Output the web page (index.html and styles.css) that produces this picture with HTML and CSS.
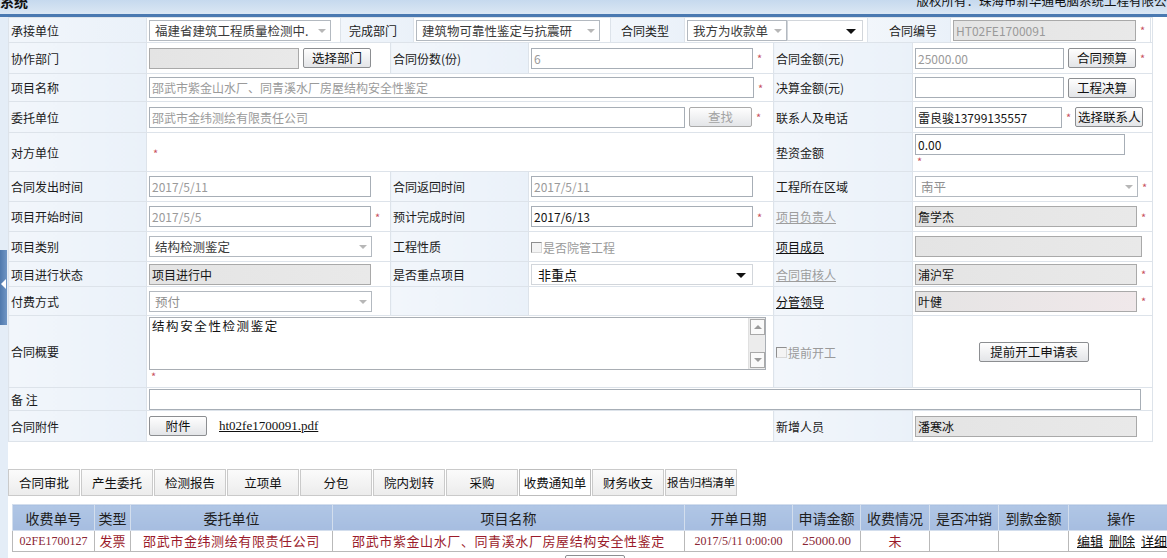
FILE: index.html
```html
<!DOCTYPE html>
<html lang="zh-CN">
<head>
<meta charset="utf-8">
<title>合同</title>
<link rel="stylesheet" href="styles.css">
</head>
<body>
<div class="page">
  <div class="topbar">
    <span class="sys">系统</span>
    <span class="copy">版权所有：珠海市新华通电脑系统工程有限公司</span>
  </div>
  <div class="handle"><span class="tri"></span></div>
  <div class="main">
    <table class="form">
      <colgroup><col class="c1"><col class="c2"><col class="c3"><col class="c4"><col class="c5"><col class="c6"></colgroup>
      <tr class="h25">
        <td colspan="6" class="flexcell">
          <div class="fr">
            <div class="fc lbl w138">承接单位</div>
            <div class="fc val w194"><span class="sel w182 dark">福建省建筑工程质量检测中.</span></div>
            <div class="fc lbl w73 pl8">完成部门</div>
            <div class="fc val w197"><span class="sel w184 dark">建筑物可靠性鉴定与抗震研</span></div>
            <div class="fc lbl w74 pl10">合同类型</div>
            <div class="fc val w183"><span class="sel w100 dark">我方为收款单</span><span class="sel blk w76"></span></div>
            <div class="fc lbl w83 pl22">合同编号</div>
            <div class="fc val w200"><span class="inp ro w183">HT02FE1700091</span><span class="star">*</span></div>
          </div>
        </td>
      </tr>
      <tr class="h31">
        <td class="lbl">协作部门</td>
        <td class="val"><span class="inp ro w150"></span><span class="btn w68 ml4">选择部门</span></td>
        <td class="lbl">合同份数(份)</td>
        <td class="val"><span class="inp w222">6</span><span class="star">*</span></td>
        <td class="lbl">合同金额(元)</td>
        <td class="val"><span class="inp w149">25000.00</span><span class="btn w68 ml4">合同预算</span><span class="star">*</span></td>
      </tr>
      <tr class="h28">
        <td class="lbl">项目名称</td>
        <td class="val" colspan="3"><span class="inp w605">邵武市紫金山水厂、同青溪水厂房屋结构安全性鉴定</span><span class="star">*</span></td>
        <td class="lbl">决算金额(元)</td>
        <td class="val"><span class="inp w149"></span><span class="btn w68 ml4">工程决算</span></td>
      </tr>
      <tr class="h31">
        <td class="lbl">委托单位</td>
        <td class="val" colspan="3"><span class="inp w536">邵武市金纬测绘有限责任公司</span><span class="btn w63 ml4 dis">查找</span><span class="star">*</span></td>
        <td class="lbl">联系人及电话</td>
        <td class="val"><span class="inp dark w147">雷良骏13799135557</span><span class="star">*</span><span class="btn w68 ml4">选择联系人</span></td>
      </tr>
      <tr class="h39">
        <td class="lbl">对方单位</td>
        <td class="val" colspan="3"><span class="star ml3">*</span></td>
        <td class="lbl">垫资金额</td>
        <td class="val top"><span class="inp dark w210 blk">0.00</span><span class="star sub">*</span></td>
      </tr>
      <tr class="h30">
        <td class="lbl">合同发出时间</td>
        <td class="val"><span class="inp w222">2017/5/11</span></td>
        <td class="lbl">合同返回时间</td>
        <td class="val"><span class="inp w222">2017/5/11</span></td>
        <td class="lbl">工程所在区域</td>
        <td class="val"><span class="sel w223">南平</span><span class="star">*</span></td>
      </tr>
      <tr class="h30">
        <td class="lbl">项目开始时间</td>
        <td class="val"><span class="inp w222">2017/5/5</span><span class="star">*</span></td>
        <td class="lbl">预计完成时间</td>
        <td class="val"><span class="inp dark w222">2017/6/13</span><span class="star">*</span></td>
        <td class="lbl"><span class="lnk gray">项目负责人</span></td>
        <td class="val"><span class="inp ro dark w222">詹学杰</span><span class="star">*</span></td>
      </tr>
      <tr class="h30">
        <td class="lbl">项目类别</td>
        <td class="val"><span class="sel dark w223">结构检测鉴定</span></td>
        <td class="lbl">工程性质</td>
        <td class="val"><span class="chk"></span><span class="gtxt">是否院管工程</span></td>
        <td class="lbl"><span class="lnk">项目成员</span></td>
        <td class="val"><span class="inp ro w227"></span></td>
      </tr>
      <tr class="h25">
        <td class="lbl">项目进行状态</td>
        <td class="val"><span class="inp ro dark w222">项目进行中</span></td>
        <td class="lbl">是否重点项目</td>
        <td class="val"><span class="sel blk dark w222">非重点</span></td>
        <td class="lbl"><span class="lnk gray">合同审核人</span></td>
        <td class="val"><span class="inp ro dark w222">浦沪军</span><span class="star">*</span></td>
      </tr>
      <tr class="h29">
        <td class="lbl">付费方式</td>
        <td class="val"><span class="sel w223">预付</span></td>
        <td class="lbl"></td>
        <td class="val"></td>
        <td class="lbl"><span class="lnk">分管领导</span></td>
        <td class="val"><span class="inp ro pink dark w222">叶健</span><span class="star">*</span></td>
      </tr>
      <tr class="h72">
        <td class="lbl">合同概要</td>
        <td class="val top" colspan="3">
          <div class="ta"><span class="tatext">结构安全性检测鉴定</span>
            <div class="sb"><span class="sbb up"></span><span class="sbb dn"></span></div>
          </div>
          <span class="star sub">*</span>
        </td>
        <td class="lbl"><span class="chk"></span><span class="gtxt">提前开工</span></td>
        <td class="val"><span class="btn w110 ml66">提前开工申请表</span></td>
      </tr>
      <tr class="h23">
        <td class="lbl">备&nbsp;注</td>
        <td class="val" colspan="5"><span class="inp w992"></span></td>
      </tr>
      <tr class="h31">
        <td class="lbl">合同附件</td>
        <td class="val" colspan="3"><span class="btn w58">附件</span><span class="file">ht02fe1700091.pdf</span></td>
        <td class="lbl">新增人员</td>
        <td class="val"><span class="inp ro dark w222">潘寒冰</span></td>
      </tr>
    </table>

    <div class="tabs">
      <span class="tab">合同审批</span>
      <span class="tab">产生委托</span>
      <span class="tab">检测报告</span>
      <span class="tab">立项单</span>
      <span class="tab">分包</span>
      <span class="tab">院内划转</span>
      <span class="tab">采购</span>
      <span class="tab on">收费通知单</span>
      <span class="tab">财务收支</span>
      <span class="tab tight">报告归档清单</span>
    </div>

    <table class="grid">
      <colgroup>
        <col class="g1"><col class="g2"><col class="g3"><col class="g4"><col class="g5">
        <col class="g6"><col class="g7"><col class="g8"><col class="g9"><col class="g10">
      </colgroup>
      <tr class="gh">
        <th>收费单号</th><th>类型</th><th>委托单位</th><th>项目名称</th><th>开单日期</th>
        <th>申请金额</th><th>收费情况</th><th>是否冲销</th><th>到款金额</th><th>操作</th>
      </tr>
      <tr class="gd">
        <td class="serif sm">02FE1700127</td>
        <td>发票</td>
        <td class="sp">邵武市金纬测绘有限责任公司</td>
        <td class="sp">邵武市紫金山水厂、同青溪水厂房屋结构安全性鉴定</td>
        <td class="serif sm">2017/5/11 0:00:00</td>
        <td class="serif">25000.00</td>
        <td>未</td>
        <td></td>
        <td></td>
        <td class="ops"><span class="op">编辑</span><span class="op">删除</span><span class="op">详细</span></td>
      </tr>
    </table>
    <div class="addrow"><span class="btn w60">增加</span></div>
  </div>
</div>
</body>
</html>
```

FILE: styles.css
```css
* { box-sizing: border-box; }
html, body { margin: 0; padding: 0; }
body {
  width: 1167px;
  height: 558px;
  overflow: hidden;
  background: #fff;
  font-family: "Noto Sans CJK SC", "Liberation Sans", sans-serif;
  font-size: 12px;
  color: #1a1a1a;
}
.page { position: relative; width: 1167px; height: 558px; overflow: hidden; }

.topbar {
  height: 17px;
  background: linear-gradient(#c6d9ee, #dbe7f4);
  border-bottom: 3px solid #4a79b1;
  display: flex;
  justify-content: space-between;
  overflow: hidden;
}
.sys { font-weight: bold; font-size: 14px; line-height: 16px; margin-top: -7px; color: #111; }
.copy { font-size: 12.5px; line-height: 16px; margin-top: -7px; margin-right: -12px; white-space: nowrap; color: #111; }

.handle {
  position: absolute;
  left: 0; top: 250px;
  width: 7px; height: 75px;
  background: linear-gradient(90deg, #4f79ad, #6f95c4);
}
.tri {
  position: absolute; left: 1px; top: 29px;
  width: 0; height: 0;
  border-top: 5px solid transparent;
  border-bottom: 5px solid transparent;
  border-right: 5px solid #fff;
}

.main {
  padding-left: 8px;
  width: 1175px;
  background: linear-gradient(90deg, #e4edf7 0, #e4edf7 8px, #fff 8px);
}

/* ---------- form ---------- */
.form {
  border-collapse: collapse;
  table-layout: fixed;
  width: 1144px;
  border-right: 1px solid #cfd6de;
}
.c1 { width: 138px; } .c2 { width: 244px; } .c3 { width: 138px; }
.c4 { width: 245px; } .c5 { width: 139px; } .c6 { width: 240px; }
.form td {
  border: 1px solid #dde3ea;
  padding: 0 0 0 2px;
  white-space: nowrap;
  vertical-align: middle;
  overflow: hidden;
}
.form td.top { vertical-align: top; padding-top: 1px; }
.form td.flexcell { padding: 0; }
.lbl { background: linear-gradient(90deg, #f2f6fb, #eaf1f9); color: #1a1a1a; }
.val { background: #fff; }
.h23 { height: 23px; } .h25 { height: 25px; } .h28 { height: 28px; } .h29 { height: 29px; }
.h30 { height: 30px; } .h31 { height: 31px; } .h39 { height: 39px; } .h72 { height: 72px; }

.fr { display: flex; height: 24px; }
.fc { display: flex; align-items: center; padding-left: 2px; border-right: 1px solid #dde3ea; }
.fc.pl8 { padding-left: 8px; }
.fc.pl10 { padding-left: 10px; }
.fc.pl22 { padding-left: 21px; }
.w73 { width: 73px; } .w74 { width: 74px; } .w83 { width: 83px; } .w138 { width: 138px; }
.w194 { width: 194px; } .w197 { width: 197px; } .w183 { width: 183px; } .w200 { width: 200px; }
.w182 { width: 182px; } .w184 { width: 184px; } .w100 { width: 100px; } .w76 { width: 76px; }

.inp {
  display: inline-block;
  height: 21px;
  border: 1px solid #a7aeb6;
  background: #fff;
  vertical-align: middle;
  line-height: 19px;
  padding-left: 2px;
  color: #9a9a9a;
  font-size: 12px;
  overflow: hidden;
  white-space: nowrap;
}
.inp.ro { background: linear-gradient(90deg, #e4e4e4, #e9e9e9); border-color: #a9a9a9; }
.inp.pink { background: linear-gradient(90deg, #e5e4e4, #f0e8ea); }
.inp.dark { color: #141414; }
.inp.blk { display: block; }
.w147 { width: 147px; } .w149 { width: 149px; } .w150 { width: 150px; } .w210 { width: 210px; }
.w222 { width: 222px; } .w223 { width: 223px; } .w227 { width: 227px; } .w536 { width: 536px; }
.w605 { width: 605px; } .w992 { width: 992px; }

.sel {
  position: relative;
  display: inline-block;
  height: 21px;
  border: 1px solid #b3b9c0;
  background: #fff;
  vertical-align: middle;
  line-height: 19px;
  padding-left: 5px;
  color: #8f8f8f;
  font-size: 12.5px;
  overflow: hidden;
  white-space: nowrap;
}
.sel.dark { color: #3a3a3a; }
.sel::after {
  content: "";
  position: absolute;
  right: 4px; top: 8px;
  width: 0; height: 0;
  border-left: 4px solid transparent;
  border-right: 4px solid transparent;
  border-top: 4px solid #b7b7b7;
}
.sel.blk { border-color: #d2d6db; }
.sel.blk::after { border-top-color: #111; right: 6px; border-left-width: 5px; border-right-width: 5px; border-top-width: 5px; }
.sel.blk.dark { color: #111; font-size: 13px; padding-left: 6px; }

.btn {
  display: inline-block;
  height: 20px;
  border: 1px solid #8c8e91;
  border-radius: 2px;
  background: linear-gradient(#fefefe, #e3e5e8);
  font-size: 12.5px;
  line-height: 18px;
  text-align: center;
  vertical-align: middle;
  color: #111;
}
.btn.dis { color: #a3a3a3; border-color: #aaa; }
.w58 { width: 58px; } .w60 { width: 60px; } .w63 { width: 63px; } .w68 { width: 68px; } .w110 { width: 110px; }
.ml3 { margin-left: 3px; } .ml4 { margin-left: 4px; } .ml66 { margin-left: 64px; }

.star { color: #c8505e; font-size: 11px; margin-left: 4px; vertical-align: middle; }
.star.sub { display: block; margin-left: 2px; line-height: 12px; height: 12px; }

.lnk { text-decoration: underline; color: #111; }
.lnk.gray { color: #9d9d9d; }
.chk {
  display: inline-block;
  width: 11px; height: 11px;
  border: 1px solid #8f8f8f;
  border-right-color: #d8d8d8;
  border-bottom-color: #d8d8d8;
  vertical-align: middle;
  margin-right: 1px;
  background: #f4f4f4;
}
.gtxt { color: #9a9a9a; vertical-align: middle; }

.ta {
  position: relative;
  width: 617px; height: 53px;
  border: 1px solid #a9aeb4;
  background: #fff;
}
.tatext { display: block; padding: 0 0 0 2px; line-height: 16px; letter-spacing: 1.6px; font-size: 12.5px; color: #111; }
.sb {
  position: absolute; right: 0; top: 0; bottom: 0;
  width: 17px;
  background: #ececec;
  border-left: 1px solid #e0e0e0;
}
.sbb {
  position: absolute; left: 1px;
  width: 15px; height: 16px;
  border: 1px solid #a9a9a9;
  background: #fafafa;
}
.sbb.up { top: 1px; }
.sbb.dn { bottom: 1px; }
.sbb::after {
  content: "";
  position: absolute; left: 3px; top: 5px;
  width: 0; height: 0;
  border-left: 4px solid transparent;
  border-right: 4px solid transparent;
}
.sbb.up::after { border-bottom: 4px solid #9a9a9a; }
.sbb.dn::after { border-top: 4px solid #9a9a9a; }

.file {
  font-family: "Liberation Serif", serif;
  font-size: 13px;
  text-decoration: underline;
  margin-left: 12px;
  vertical-align: middle;
  color: #111;
}

/* ---------- tabs ---------- */
.tabs { display: flex; margin-top: 27px; height: 27px; }
.tab {
  width: 72px;
  height: 27px;
  margin-right: 1px;
  border: 1px solid #cacaca;
  background: linear-gradient(#fbfbfb, #ececec);
  text-align: center;
  line-height: 25px;
  font-size: 12.5px;
  color: #111;
  white-space: nowrap;
  overflow: hidden;
}
.tab.on { background: #fff; border-color: #bdbdbd; }
.tab.tight { font-size: 11.5px; letter-spacing: -0.2px; }

/* ---------- grid ---------- */
.grid {
  margin-top: 8px;
  margin-left: 4px;
  border-collapse: collapse;
  table-layout: fixed;
  width: 1161px;
}
.g1 { width: 82px; } .g2 { width: 36px; } .g3 { width: 202px; } .g4 { width: 352px; }
.g5 { width: 108px; } .g6 { width: 68px; } .g7 { width: 69px; } .g8 { width: 69px; }
.g9 { width: 70px; } .g10 { width: 105px; }
.gh th {
  height: 26px;
  background: linear-gradient(#b0c6e5, #a6bde0);
  border: 1px solid #d3deed;
  font-weight: normal;
  font-size: 14px;
  color: #1e1e1e;
  white-space: nowrap;
  overflow: hidden;
}
.gd td {
  height: 20px;
  border: 1px solid #b9b9b9;
  text-align: center;
  color: #9b1b2b;
  font-size: 13px;
  white-space: nowrap;
  overflow: hidden;
  line-height: 18px;
}
.gd td.sp { letter-spacing: 0.6px; }
.gd td.serif { font-family: "Liberation Serif", serif; color: #8a2634; }
.gd td.sm { font-size: 12px; }
.gd td.ops { text-align: left; padding-left: 8px; }
.op { color: #111; text-decoration: underline; margin-right: 6px; font-size: 13px; }

.addrow { padding-left: 557px; padding-top: 2px; }
```
